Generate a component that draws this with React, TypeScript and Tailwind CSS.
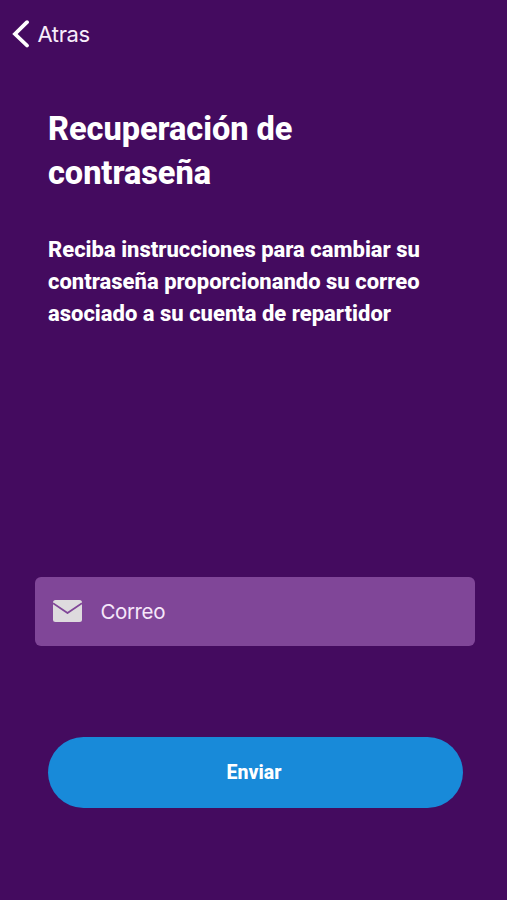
import React, { useState } from 'react';

function BackButton() {
  return (
    <button type="button" className="flex h-[68px] items-center pl-3 font-[Inter,sans-serif] text-[22px] tracking-[-0.4px] text-[#f8edfb]">
      <svg viewBox="0 0 18 28" className="mr-[7.5px] h-7 w-[18px] text-white" fill="none" stroke="currentColor" strokeWidth="3.8" strokeLinecap="round">
        <path d="M15 2.2 3 14l12 11.5" />
      </svg>
      Atras
    </button>
  );
}

function EmailField({ value, onChange }: { value: string; onChange: (value: string) => void }) {
  return (
    <label className="mr-8 ml-[34.5px] flex h-[69px] items-center rounded-md bg-[#804698] pl-[18.5px]">
      <svg viewBox="0 0 29 22" className="h-[22px] w-[29px] shrink-0 text-[#dedbde]">
        <rect width="29" height="22" rx="2.5" fill="currentColor" />
        <path d="M0 3.2 14.5 13 29 3.2" fill="none" stroke="#804698" strokeWidth="1.8" strokeLinejoin="round" />
      </svg>
      <input
        type="email"
        placeholder="Correo"
        value={value}
        onChange={(e) => onChange(e.target.value)}
        className="ml-[18.5px] w-full bg-transparent pt-[2px] font-[Inter,sans-serif] text-[20.5px] tracking-[-0.4px] text-white outline-none placeholder:text-[#f6e8fa]"
      />
    </label>
  );
}

export default function App() {
  const [email, setEmail] = useState('');

  return (
    <main className="flex h-[900px] w-[507px] flex-col bg-[#440b5f] font-[Roboto,sans-serif] text-white">
      <header>
        <BackButton />
      </header>

      <section className="h-[508.5px] px-12 pt-[39px]">
        <h1 className="w-[320px] text-[32.5px] leading-[44px] font-extrabold tracking-[-0.05px]">
          Recuperación de<br />contraseña
        </h1>
        <p className="mt-[39px] text-[22px] leading-[32px] font-extrabold whitespace-nowrap">
          Reciba instrucciones para cambiar su<br />
          contraseña proporcionando su correo<br />
          asociado a su cuenta de repartidor
        </p>
      </section>

      <EmailField value={email} onChange={setEmail} />

      <button type="button" className="mt-[91px] mr-[44.5px] ml-[47.5px] h-[71px] rounded-full bg-[#188ad9] pt-[2px] pr-[2px] text-[19.5px] font-extrabold">
        Enviar
      </button>
    </main>
  );
}
